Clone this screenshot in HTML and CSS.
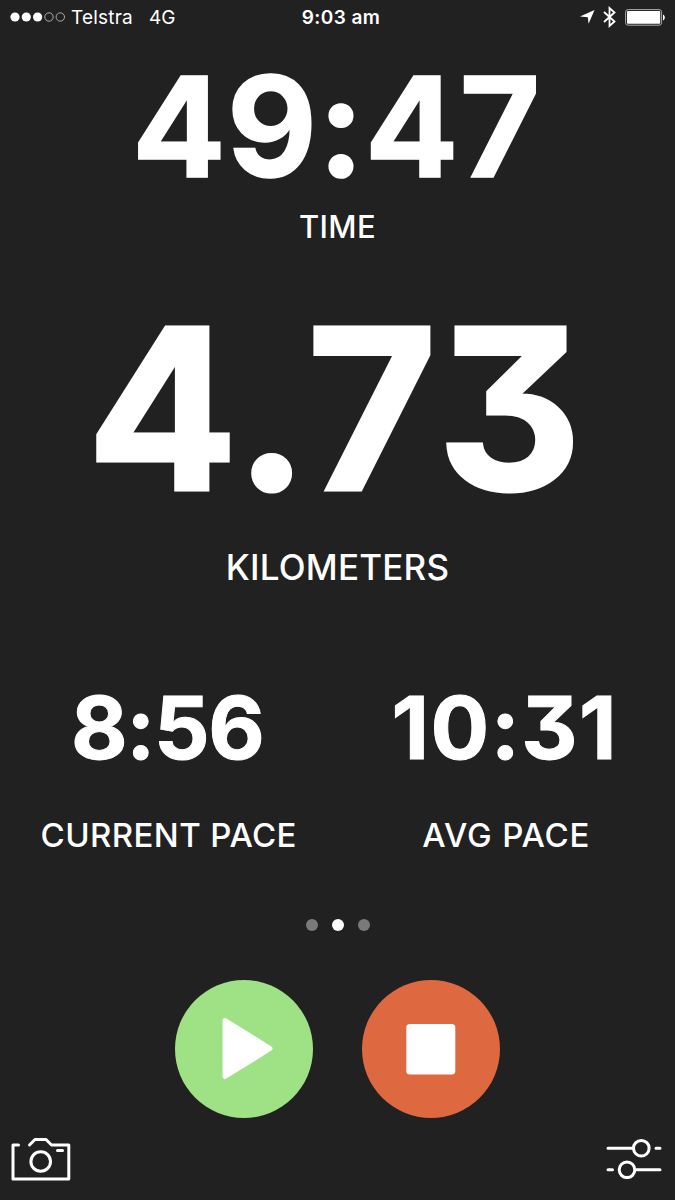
FILE: index.html
```html
<!DOCTYPE html>
<html lang="en">
<head>
    <meta charset="UTF-8">
    <meta name="viewport" content="width=device-width, initial-scale=1.0">
    <title>Run</title>
    <link rel="stylesheet" href="styles.css">
</head>
<body>
    <div class="status-bar">
        <div class="carrier">
            <svg class="signal" width="56" height="12" viewBox="0 0 56 12">
                <circle cx="5" cy="6" r="4.6" fill="#fff"/>
                <circle cx="16.3" cy="6" r="4.6" fill="#fff"/>
                <circle cx="27.6" cy="6" r="4.6" fill="#fff"/>
                <circle cx="39" cy="6" r="4.2" fill="none" stroke="#ccc" stroke-width="0.8"/>
                <circle cx="50.3" cy="6" r="4.2" fill="none" stroke="#ccc" stroke-width="0.8"/>
            </svg>
            <span class="carrier-name">Telstra</span>
            <span class="network">4G</span>
        </div>
        <div class="clock">9:03 am</div>
        <div class="indicators">
            <svg width="15" height="14" viewBox="0 0 15 14">
                <path d="M14.500 0L8.600 13.800L7.800 7.200L0 6.500Z" fill="#fff"/>
            </svg>
            <svg class="bluetooth" width="13" height="22" viewBox="0 0 13 22">
                <path d="M1 6L11.500 15.500L6.500 20V2L11.500 6.500L1 16" fill="none" stroke="#fff" stroke-width="1.8"/>
            </svg>
            <svg class="battery" width="41" height="17" viewBox="0 0 41 17">
                <rect x="0.6" y="0.6" width="36" height="15.6" rx="2.5" fill="none" stroke="#aaa" stroke-width="1"/>
                <rect x="2" y="2" width="33.2" height="12.8" rx="1" fill="#fff"/>
                <path d="M38 5.4C40.4 6.2 40.4 10.6 38 11.4Z" fill="#fff"/>
            </svg>
        </div>
    </div>

    <div class="metric time">
        <div class="value">49:47</div>
        <div class="label">TIME</div>
    </div>

    <div class="metric distance">
        <div class="value">4.73</div>
        <div class="label">KILOMETERS</div>
    </div>

    <div class="paces">
        <div class="metric pace current">
            <div class="value">8:56</div>
            <div class="label">CURRENT PACE</div>
        </div>
        <div class="metric pace avg">
            <div class="value">10:31</div>
            <div class="label">AVG PACE</div>
        </div>
    </div>

    <div class="dots">
        <span class="dot"></span>
        <span class="dot active"></span>
        <span class="dot"></span>
    </div>

    <div class="controls">
        <button class="round play" aria-label="Resume">
            <svg width="138" height="138" viewBox="0 0 138 138">
                <path d="M50 40.500L95 68.500L50 96.500Z" fill="#fff" stroke="#fff" stroke-width="5" stroke-linejoin="round"/>
            </svg>
        </button>
        <button class="round stop" aria-label="Finish">
            <svg width="138" height="138" viewBox="0 0 138 138">
                <rect x="44.3" y="44" width="49" height="50.5" rx="3.5" fill="#fff"/>
            </svg>
        </button>
    </div>

    <div class="footer">
        <svg width="60" height="44" viewBox="0 0 60 44" fill="none" stroke="#fff" stroke-width="3" stroke-linecap="round" stroke-linejoin="round">
            <path d="M7.500 8H2V42H57.800V8H40.500L35 2.500H24L18.500 8"/>
            <path d="M46.500 13.500H51.500"/>
            <circle cx="29.700" cy="24.500" r="9.800"/>
        </svg>
        <svg width="56" height="42" viewBox="0 0 56 42" fill="none" stroke="#fff" stroke-width="3" stroke-linecap="round">
            <path d="M2 11.200H27M50 11.200H54M2 32.800H6.500M29 32.800H54"/>
            <circle cx="35.300" cy="11.200" r="7.800"/>
            <circle cx="21" cy="32.800" r="7.800"/>
        </svg>
    </div>
</body>
</html>
```
FILE: styles.css
```css
* {
    box-sizing: border-box;
}
body {
    margin: 0;
    height: 1200px;
    background: #212121;
    color: #fff;
    font-family: Inter, "Open Sans", sans-serif;
    text-align: center;
    overflow: hidden;
}
svg {
    display: block;
}
.status-bar {
    display: grid;
    grid-template-columns: 1fr auto 1fr;
    align-items: center;
    height: 34px;
    padding: 0 9px 0 10px;
    font-size: 19px;
    line-height: 24px;
}
.carrier {
    display: flex;
    align-items: center;
}
.carrier-name,
.network,
.clock {
    padding-top: 2px;
}
.carrier-name {
    margin-left: 5px;
    letter-spacing: 0.2px;
}
.network {
    margin-left: 16px;
}
.clock {
    margin-left: 6px;
    font-weight: 600;
    letter-spacing: 0.4px;
    font-feature-settings: "calt" 0;
}
.indicators {
    display: flex;
    align-items: center;
    justify-content: flex-end;
}
.bluetooth {
    margin: 0 9px 0 8px;
}
.value {
    font-weight: 700;
    font-feature-settings: "cv09", "calt" 0;
    white-space: nowrap;
}
.label {
    font-weight: 500;
    white-space: nowrap;
}
.time {
    padding-top: 32px;
}
.time .value {
    padding-right: 2px;
    font-size: 139px;
    line-height: 121px;
    letter-spacing: 0.7px;
    -webkit-text-stroke: 1.5px #fff;
}
.time .label {
    margin-top: 19px;
    font-size: 31px;
    line-height: 41px;
    letter-spacing: 0.3px;
}
.distance {
    margin-top: 60px;
}
.distance .value {
    padding-right: 3px;
    font-size: 224px;
    line-height: 204px;
    letter-spacing: 3.5px;
    -webkit-text-stroke: 3px #fff;
}
.distance .label {
    margin-top: 35px;
    font-size: 35px;
    line-height: 42px;
    letter-spacing: 0.2px;
}
.paces {
    display: grid;
    grid-template-columns: 1fr 1fr;
    margin-top: 100px;
}
.pace .value {
    padding-right: 3px;
    font-size: 87px;
    line-height: 80px;
    letter-spacing: 1.5px;
    -webkit-text-stroke: 1px #fff;
}
.current .value {
    letter-spacing: -1.3px;
}
.pace .label {
    margin-top: 47px;
    font-size: 33px;
    line-height: 40px;
    letter-spacing: 0.4px;
}
.avg .label {
    letter-spacing: 0.8px;
}
.dots {
    display: flex;
    justify-content: center;
    gap: 14px;
    margin-top: 64px;
}
.dot {
    width: 12px;
    height: 12px;
    border-radius: 50%;
    background: #7a7a7a;
}
.dot.active {
    background: #fff;
}
.controls {
    display: flex;
    justify-content: center;
    gap: 49px;
    margin-top: 49px;
}
.round {
    width: 138px;
    height: 138px;
    padding: 0;
    border: none;
    border-radius: 50%;
    cursor: pointer;
}
.play {
    background: #9fe285;
}
.stop {
    background: #de6840;
}
.footer {
    display: flex;
    justify-content: space-between;
    margin-top: 19px;
    padding: 0 13px 0 10.5px;
}
```
